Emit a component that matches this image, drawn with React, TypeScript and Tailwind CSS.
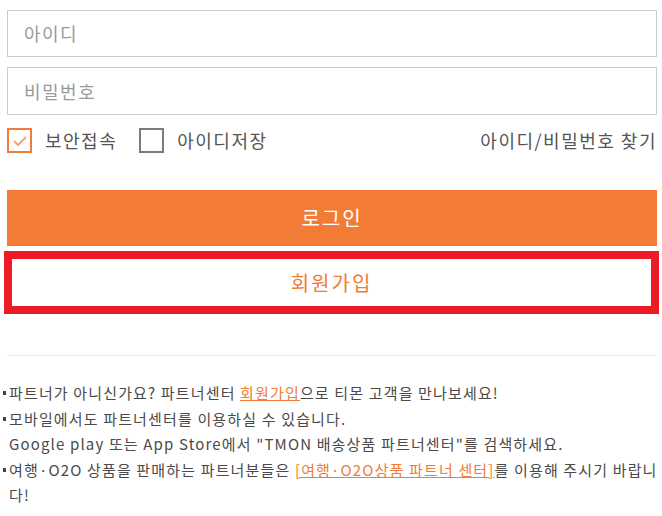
import React from "react";

const Bullet = () => (
  <span className="inline-block w-[3px] h-[4px] bg-[#444] align-middle mr-[3px] mb-[3px]" />
);

export default function App() {
  return (
    <div
      className="w-[662px] h-[516px] bg-white pt-[10px] pl-[7px] pr-[5px] overflow-hidden"
      style={{ fontFamily: '"Noto Sans CJK KR", "Noto Sans", sans-serif' }}
    >
      <div className="h-[47px] border border-[#cccccc] flex items-center pl-[16px] text-[18px] tracking-[1.5px] text-[#9a9a9a]">
        아이디
      </div>
      <div className="mt-[10px] h-[48px] border border-[#cccccc] flex items-center pl-[16px] text-[18px] tracking-[1.5px] text-[#9a9a9a]">
        비밀번호
      </div>
      <div className="mt-[13px] h-[25px] flex items-center text-[18px] tracking-[1.5px] text-[#555555]">
        <span className="w-[25px] h-[25px] border-2 border-[#f27b36] flex items-center justify-center">
          <svg width="16" height="12" viewBox="0 0 16 12">
            <path d="M2 6 L6 10 L14 2" fill="none" stroke="#f7a47a" strokeWidth="2" />
          </svg>
        </span>
        <span className="ml-[13px]">보안접속</span>
        <span className="ml-[22px] w-[25px] h-[25px] border-2 border-[#7a7a80]" />
        <span className="ml-[13px]">아이디저장</span>
        <span className="ml-auto mr-[0px]">아이디/비밀번호 찾기</span>
      </div>
      <div className="mt-[37px] h-[56px] bg-[#f27b36] flex items-center justify-center text-white text-[20px] tracking-[2px]">
        로그인
      </div>
      <div className="mt-[5px] -ml-[3px] -mr-[2px] h-[63px] border-8 border-[#ed1c24] flex items-center justify-center text-[#f27b36] text-[20px] tracking-[2px]">
        회원가입
      </div>
      <div className="mt-[41px] h-px bg-[#e6e6e6] mr-0" />
      <div className="mt-[24px] -ml-[4px] -mr-[5px] text-[15px] leading-[25.5px] text-[#4a4a4a] tracking-[1.15px]">
        <div>
          <Bullet />
          파트너가 아니신가요? 파트너센터{" "}
          <span className="text-[#f27b36] underline">회원가입</span>으로 티몬 고객을 만나보세요!
        </div>
        <div>
          <Bullet />
          모바일에서도 파트너센터를 이용하실 수 있습니다.
        </div>
        <div className="pl-[6px]">
          Google play 또는 App Store에서 "TMON 배송상품 파트너센터"를 검색하세요.
        </div>
        <div className="whitespace-nowrap">
          <Bullet />
          여행·O2O 상품을 판매하는 파트너분들은{" "}
          <span className="text-[#f27b36] underline">[여행·O2O상품 파트너 센터]</span>를 이용해 주시기 바랍니
        </div>
        <div className="pl-[6px]">다!</div>
      </div>
    </div>
  );
}
